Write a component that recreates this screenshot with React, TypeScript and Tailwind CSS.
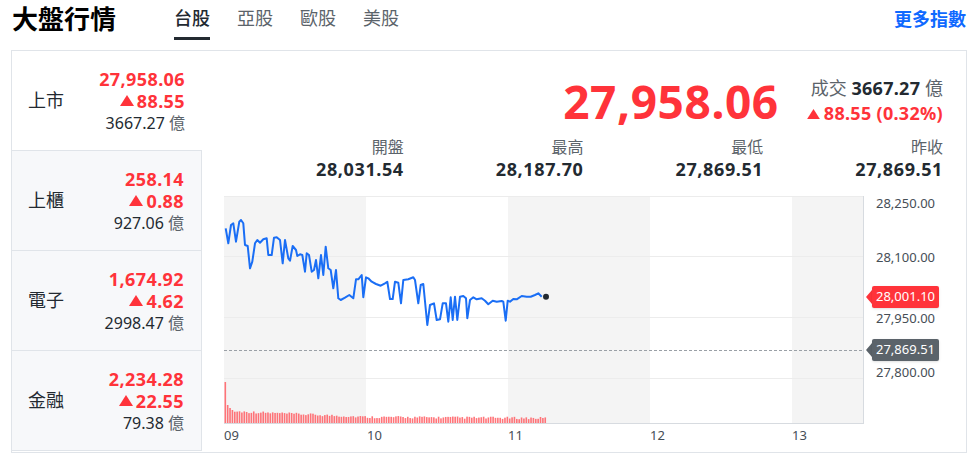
import React from "react";

const RED = "#ff333a";

const indices = [
  { name: "上市", price: "27,958.06", chg: "88.55", vol: "3667.27", active: true },
  { name: "上櫃", price: "258.14", chg: "0.88", vol: "927.06" },
  { name: "電子", price: "1,674.92", chg: "4.62", vol: "2998.47" },
  { name: "金融", price: "2,234.28", chg: "22.55", vol: "79.38" },
];

const stats = [
  { label: "開盤", value: "28,031.54" },
  { label: "最高", value: "28,187.70" },
  { label: "最低", value: "27,869.51" },
  { label: "昨收", value: "27,869.51" },
];

// traced points of the intraday line, page coords
const raw: [number, number][] = [
  [225.7, 228.3], [228.3, 243.3], [231, 225], [233.3, 223.3], [236, 241.7], [239.3, 221.7],
  [241, 220], [243.3, 223.3], [245, 245], [247.7, 246], [250, 268.3], [252.3, 261.7],
  [255, 243.3], [257.3, 240], [260, 242.7], [263.3, 239.3], [266.7, 238.3], [268.3, 255],
  [271.7, 255], [274, 237.7], [276.7, 237.3], [280, 240], [282.7, 263.3], [285, 240],
  [288.3, 258.3], [290, 260.7], [292.7, 246], [296, 250], [297.3, 256], [300, 254.3],
  [302.3, 255], [305, 271.7], [306.7, 253.3], [309, 255], [311.7, 271.7], [314, 270],
  [316, 260], [318.3, 278.3], [321, 255], [323.3, 275], [325.7, 246.7], [328.3, 268.3],
  [330.7, 270], [333.3, 288.3], [336, 270], [338.3, 298.3], [340.7, 300], [345, 297.7],
  [349.3, 295], [353.3, 298.3], [356, 279.3], [358.3, 279.3], [361.7, 275], [363.3, 297.3],
  [366, 277.3], [368.3, 278.3], [371.7, 281.7], [376, 284], [380.7, 285.7], [385, 283.3],
  [387.3, 281.7], [390, 299], [392.7, 299], [395, 281.7], [398.3, 282.7], [401, 303.3],
  [403.3, 280], [408.3, 279.3], [413.3, 277.3], [415, 280], [418.3, 303.3], [420.7, 285],
  [423.3, 284], [427.3, 325], [430, 305], [434, 303.3], [436.7, 320], [440, 319.3],
  [442.7, 303.3], [446, 303.3], [448.3, 321.7], [450.7, 297.3], [452.7, 320], [455, 296.7],
  [457.3, 320], [460, 296.7], [463.3, 296], [466, 298.3], [467.3, 318.3], [470, 300],
  [473.3, 297.3], [476.7, 299.3], [481.7, 298.3], [485, 300.7], [488.3, 304.3], [492.7, 300.7],
  [496.7, 301.7], [501.7, 301], [503.3, 301.7], [505.7, 320.7], [507.7, 300.7], [510, 301.7],
  [513.3, 299], [516.7, 299.3], [521.7, 296], [526.7, 296.7], [530.7, 296.7], [535, 295],
  [538.3, 293.3], [541.7, 296.7],
];
const linePath = raw
  .map(([x, y], i) => `${i ? "L" : "M"}${(x - 224).toFixed(1)} ${(y - 196).toFixed(1)}`)
  .join(" ");

const noise = (i: number) => Math.abs(Math.sin(i * 12.9898) * 43758.5453) % 1;
const bars = Array.from({ length: 136 }, (_, i) => {
  if (i === 0) return 41;
  if (i === 1) return 18;
  if (i === 2) return 15;
  if (i === 3) return 13;
  const base = i < 60 ? 12 - (i / 60) * 6 : 6 - ((i - 60) / 76) * 1.2;
  return base + (noise(i) - 0.5) * 2.4;
});

function Up({ w = 14, h = 11 }: { w?: number; h?: number }) {
  return (
    <svg width={w} height={h} viewBox="0 0 14 11" className="inline-block">
      <path d="M7 0 L14 11 L0 11 Z" fill={RED} />
    </svg>
  );
}

function Tag({ top, bg, text }: { top: number; bg: string; text: string }) {
  return (
    <div
      className="absolute left-[642px] flex items-center h-[22px] -translate-y-1/2"
      style={{ top }}
    >
      <span
        className="w-0 h-0 border-y-[7px] border-y-transparent border-r-[6px]"
        style={{ borderRightColor: bg }}
      />
      <span
        className="h-full flex items-center px-[4px] rounded-[2px] text-[13px] text-white shadow-sm"
        style={{ backgroundColor: bg }}
      >
        {text}
      </span>
    </div>
  );
}

function Chart() {
  const yLabels = [
    { t: "28,250.00", y: 7 },
    { t: "28,100.00", y: 61 },
    { t: "27,950.00", y: 122 },
    { t: "27,800.00", y: 176 },
  ];
  const xLabels = [
    { t: "09", x: 0 },
    { t: "10", x: 143 },
    { t: "11", x: 284 },
    { t: "12", x: 426 },
    { t: "13", x: 568 },
  ];
  return (
    <div className="relative h-[256px] mt-[16px]">
      <svg width="640" height="228" className="block">
        <rect x="0" y="0" width="142" height="227" fill="#f4f4f4" />
        <rect x="284" y="0" width="142" height="227" fill="#f4f4f4" />
        <rect x="568" y="0" width="71" height="227" fill="#f4f4f4" />
        {[0.5, 60.5, 121.5, 182.5].map((y) => (
          <line key={y} x1="0" x2="639" y1={y} y2={y} stroke="#ececec" strokeWidth="1" />
        ))}
        <line x1="0" x2="640" y1="154.5" y2="154.5" stroke="#9aa0a6" strokeWidth="1" strokeDasharray="3 2" />
        {bars.map((h, i) => (
          <rect
            key={i}
            x={0.5 + i * 2.37}
            y={227 - h}
            width="1.6"
            height={h}
            fill="#ff5c62"
            opacity="0.85"
          />
        ))}
        <path d={linePath} fill="none" stroke="#1a6ef5" strokeWidth="2" strokeLinejoin="round" />
        <circle cx="322" cy="100.7" r="3" fill="#232a31" />
        <line x1="639.5" x2="639.5" y1="0" y2="227" stroke="#d7dbe0" />
        <line x1="0" x2="640" y1="227.5" y2="227.5" stroke="#d7dbe0" />
      </svg>
      {yLabels.map((l) => (
        <div
          key={l.t}
          className="absolute left-[652px] text-[13px] leading-[16px] text-[#464e56] -translate-y-1/2"
          style={{ top: l.y }}
        >
          {l.t}
        </div>
      ))}
      <Tag top={101} bg={RED} text="28,001.10" />
      <Tag top={154} bg="#5b636a" text="27,869.51" />
      {xLabels.map((l) => (
        <div
          key={l.t}
          className="absolute text-[13px] leading-[16px] text-[#464e56] -translate-y-1/2"
          style={{ top: 239, left: l.x }}
        >
          {l.t}
        </div>
      ))}
    </div>
  );
}

export default function App() {
  return (
    <div
      className="w-[970px] h-[460px] bg-white text-[#232a31] overflow-hidden"
      style={{ fontFamily: '"Noto Sans", "Noto Sans CJK TC", sans-serif' }}
    >
      {/* Header */}
      <header className="flex items-start h-[50px] pl-[12px] pr-[4px]">
        <h1 className="text-[26px] leading-[38px] font-semibold text-black">大盤行情</h1>
        <nav className="flex gap-[27px] ml-[58px]">
          {["台股", "亞股", "歐股", "美股"].map((t, i) => (
            <div key={t} className="flex flex-col">
              <span
                className={`text-[18px] leading-[37px] ${i === 0 ? "text-[#232a31] font-medium" : "text-[#5b636a]"}`}
              >
                {t}
              </span>
              <span className={`h-[3px] ${i === 0 ? "bg-[#232a31]" : ""}`} />
            </div>
          ))}
        </nav>
        <a className="ml-auto text-[18px] leading-[38px] font-semibold text-[#0f69ff]">更多指數</a>
      </header>

      {/* Panel */}
      <div className="ml-[11px] w-[956px] h-[403px] border border-[#e0e4e9] flex">
        <div className="w-[190px] flex flex-col">
          {indices.map((it) => (
            <div
              key={it.name}
              className={`h-[100px] flex items-center justify-between pl-[16px] pr-[17px] border-b border-[#e0e4e9] ${
                it.active ? "bg-white" : "bg-[#f7f8fa] border-r"
              }`}
            >
              <span className="text-[18px]">{it.name}</span>
              <div className="flex flex-col items-end leading-[22px]">
                <span className="text-[18px] font-bold tracking-[0.4px]" style={{ color: RED }}>
                  {it.price}
                </span>
                <span
                  className="text-[18px] font-bold tracking-[0.4px] flex items-center gap-[3px]"
                  style={{ color: RED }}
                >
                  <Up />
                  {it.chg}
                </span>
                <span className="text-[16px]">
                  {it.vol} <span className="text-[#5b636a]">億</span>
                </span>
              </div>
            </div>
          ))}
        </div>

        <div className="flex-1 pl-[22px] pr-[23px]">
          <div className="flex justify-end items-center gap-[28px] h-[52px] mt-[24px]">
            <span className="text-[46px] leading-[52px] font-bold tracking-[0.6px]" style={{ color: RED }}>
              27,958.06
            </span>
            <div className="flex flex-col items-end leading-[25px] text-[18px]">
              <span>
                <span className="text-[#5b636a]">成交 </span>
                <span className="font-bold tracking-[0.3px]">3667.27</span>
                <span className="text-[#5b636a]"> 億</span>
              </span>
              <span className="font-bold tracking-[0.3px] flex items-center gap-[4px]" style={{ color: RED }}>
                <Up w={13} h={10} />
                88.55 (0.32%)
              </span>
            </div>
          </div>
          <div className="grid grid-cols-4 mt-[9px]">
            {stats.map((s) => (
              <div key={s.label} className="flex flex-col items-end leading-[22px]">
                <span className="text-[16px] text-[#5b636a]">{s.label}</span>
                <span className="text-[18px] font-bold tracking-[0.6px]">{s.value}</span>
              </div>
            ))}
          </div>
          <Chart />
        </div>
      </div>
    </div>
  );
}
